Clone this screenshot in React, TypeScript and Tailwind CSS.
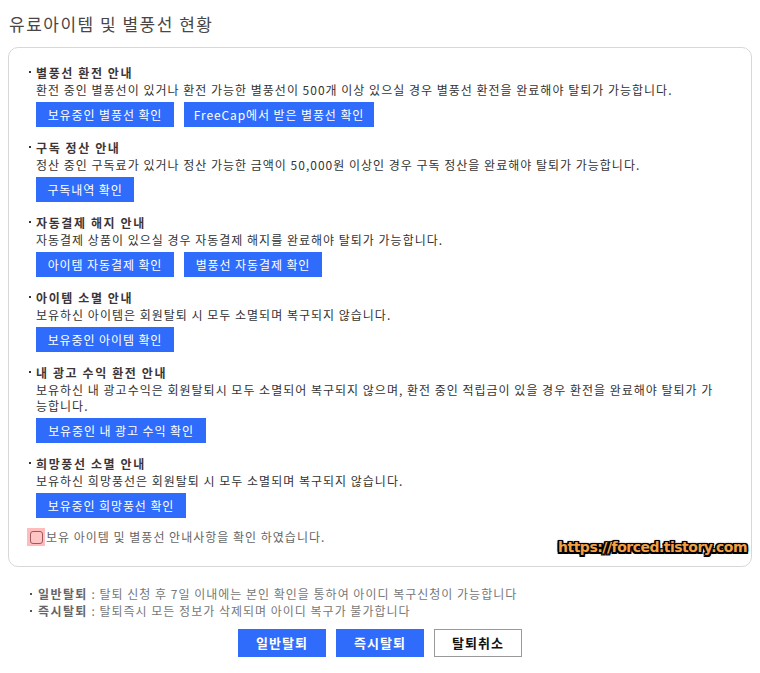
import React from "react";

const font = { fontFamily: '"Noto Sans CJK KR", "Noto Sans", sans-serif' };

type Btn = { label: string; w: string };
type Section = { title: string; lines: string[]; buttons: Btn[] };

const sections: Section[] = [
  {
    title: "별풍선 환전 안내",
    lines: ["환전 중인 별풍선이 있거나 환전 가능한 별풍선이 500개 이상 있으실 경우 별풍선 환전을 완료해야 탈퇴가 가능합니다."],
    buttons: [
      { label: "보유중인 별풍선 확인", w: "w-[138px]" },
      { label: "FreeCap에서 받은 별풍선 확인", w: "w-[190px]" },
    ],
  },
  {
    title: "구독 정산 안내",
    lines: ["정산 중인 구독료가 있거나 정산 가능한 금액이 50,000원 이상인 경우 구독 정산을 완료해야 탈퇴가 가능합니다."],
    buttons: [{ label: "구독내역 확인", w: "w-[98px]" }],
  },
  {
    title: "자동결제 해지 안내",
    lines: ["자동결제 상품이 있으실 경우 자동결제 해지를 완료해야 탈퇴가 가능합니다."],
    buttons: [
      { label: "아이템 자동결제 확인", w: "w-[138px]" },
      { label: "별풍선 자동결제 확인", w: "w-[138px]" },
    ],
  },
  {
    title: "아이템 소멸 안내",
    lines: ["보유하신 아이템은 회원탈퇴 시 모두 소멸되며 복구되지 않습니다."],
    buttons: [{ label: "보유중인 아이템 확인", w: "w-[138px]" }],
  },
  {
    title: "내 광고 수익 환전 안내",
    lines: [
      "보유하신 내 광고수익은 회원탈퇴시 모두 소멸되어 복구되지 않으며, 환전 중인 적립금이 있을 경우 환전을 완료해야 탈퇴가 가",
      "능합니다.",
    ],
    buttons: [{ label: "보유중인 내 광고 수익 확인", w: "w-[170px]" }],
  },
  {
    title: "희망풍선 소멸 안내",
    lines: ["보유하신 희망풍선은 회원탈퇴 시 모두 소멸되며 복구되지 않습니다."],
    buttons: [{ label: "보유중인 희망풍선 확인", w: "w-[150px]" }],
  },
];

export default function App() {
  return (
    <div className="w-[760px] h-[673px] bg-white relative" style={font}>
      <div className="pl-[9px] pt-[13px] h-[47px]">
        <h1 className="text-[17px] leading-[22px] text-[#4a4646] font-normal tracking-[1.5px]">유료아이템 및 별풍선 현황</h1>
      </div>
      <div className="relative mx-[8px] w-[744px] border border-[#d8d8d8] rounded-[10px] pl-[19px] pt-[16px] pb-[20px]">
        <div className="flex flex-col gap-[12px]">
          {sections.map((s) => (
            <div key={s.title} className="flex flex-col">
              <div className="flex items-center h-[18px]">
                <span className="w-[8px] flex items-center">
                  <span className="block w-[2px] h-[2px] bg-[#333] -mt-[3px] ml-[1px]" />
                </span>
                <span className="text-[12px] font-bold text-[#3d3535] whitespace-nowrap tracking-[1.6px]">{s.title}</span>
              </div>
              <div className="pl-[8px]">
                {s.lines.map((l, i) => (
                  <div key={i} className="text-[12px] leading-[16px] text-[#333] whitespace-nowrap tracking-[1px]">
                    {l}
                  </div>
                ))}
              </div>
              <div className="pl-[8px] mt-[4px] flex gap-[10px]">
                {s.buttons.map((b) => (
                  <button
                    key={b.label}
                    className={`${b.w} h-[25px] bg-[#306cfb] text-white text-[12px] tracking-[0.9px] flex items-center justify-center whitespace-nowrap`}
                  >
                    {b.label}
                  </button>
                ))}
              </div>
            </div>
          ))}
        </div>
        <div className="mt-[10px] flex items-center h-[18px]">
          <span className="w-[18px] h-[18px] bg-[#ffbcbc] flex items-center justify-center -ml-[1px]">
            <span className="w-[13px] h-[13px] border border-[#9c5a60] rounded-[3px] bg-[#ffc4c4]" />
          </span>
          <span className="ml-[1px] text-[12px] text-[#666] whitespace-nowrap tracking-[1px]">보유 아이템 및 별풍선 안내사항을 확인 하였습니다.</span>
        </div>
        <div
          className="absolute right-[4px] bottom-[8px] text-[14px] font-bold text-[#f4a043] whitespace-nowrap tracking-[-0.5px]"
          style={{
            fontFamily: '"DejaVu Sans", sans-serif',
            textShadow:
              "-1.5px -1.5px 0 #000, 1.5px -1.5px 0 #000, -1.5px 1.5px 0 #000, 1.5px 1.5px 0 #000, 0 -1.5px 0 #000, 0 1.5px 0 #000, -1.5px 0 0 #000, 1.5px 0 0 #000, 0 0 3px #000",
          }}
        >
          https://forced.tistory.com
        </div>
      </div>
      <div className="pl-[30px] pt-[18px] flex flex-col">
        <div className="flex items-center h-[17px] text-[12px] text-[#777] whitespace-nowrap tracking-[1px]">
          <span className="w-[8px] flex items-center">
            <span className="block w-[2px] h-[2px] bg-[#555]" />
          </span>
          <span className="font-bold text-[#666] tracking-[1.4px]">일반탈퇴</span>
          <span>&nbsp;: 탈퇴 신청 후 7일 이내에는 본인 확인을 통하여 아이디 복구신청이 가능합니다</span>
        </div>
        <div className="flex items-center h-[17px] text-[12px] text-[#777] whitespace-nowrap tracking-[1px]">
          <span className="w-[8px] flex items-center">
            <span className="block w-[2px] h-[2px] bg-[#555]" />
          </span>
          <span className="font-bold text-[#666] tracking-[1.4px]">즉시탈퇴</span>
          <span>&nbsp;: 탈퇴즉시 모든 정보가 삭제되며 아이디 복구가 불가합니다</span>
        </div>
      </div>
      <div className="mt-[10px] flex justify-center gap-[10px]">
        <button className="w-[88px] h-[28px] bg-[#306cfb] text-white text-[13px] font-bold tracking-[1px] flex items-center justify-center">
          일반탈퇴
        </button>
        <button className="w-[88px] h-[28px] bg-[#306cfb] text-white text-[13px] font-bold tracking-[1px] flex items-center justify-center">
          즉시탈퇴
        </button>
        <button className="w-[88px] h-[28px] bg-white border border-[#999] text-[#111] text-[13px] font-bold tracking-[1px] flex items-center justify-center">
          탈퇴취소
        </button>
      </div>
    </div>
  );
}
